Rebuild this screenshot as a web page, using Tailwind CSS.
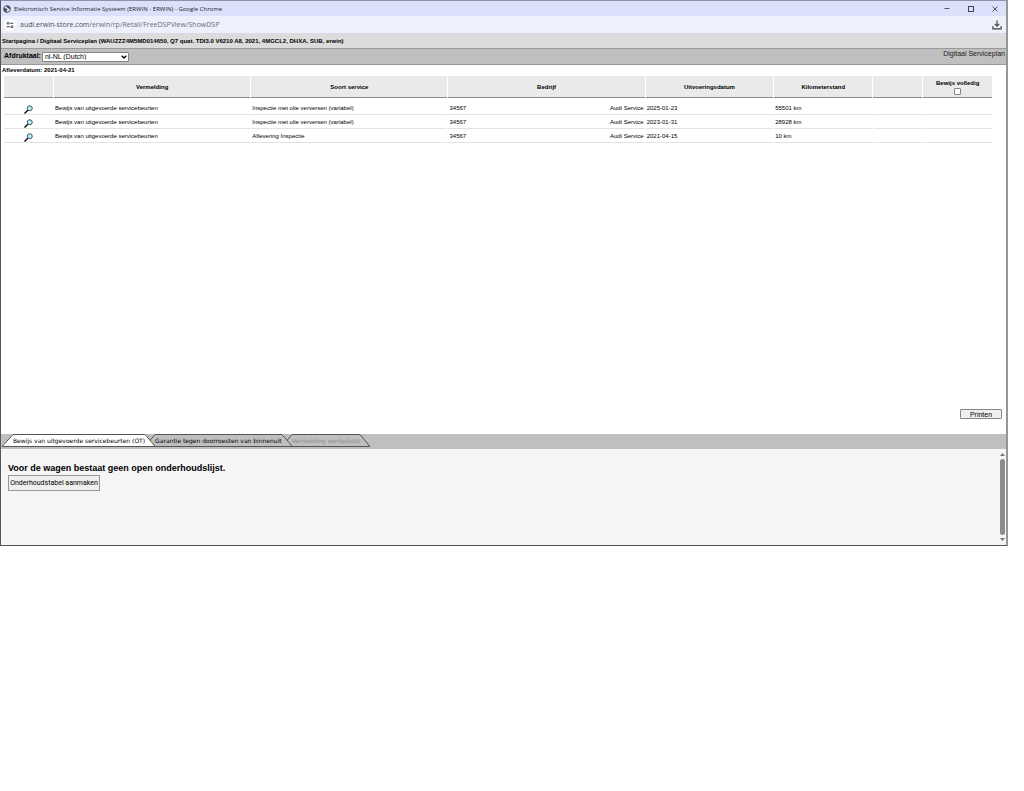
<!DOCTYPE html>
<html lang="nl">
<head>
  <meta charset="UTF-8" />
  <meta name="viewport" content="width=device-width, initial-scale=1.0"/>
  <title>Elektronisch Service Informatie Systeem (ERWIN - ERWIN)</title>
  <script src="https://cdn.jsdelivr.net/npm/@tailwindcss/browser@4"></script>
</head>
<body class="bg-white font-['Liberation_Sans',Arial,sans-serif] text-black">
  <div class="mr-4 border border-r-2 border-t-[#8f93a8] border-r-[#969696] border-b-[#555] border-l-[#555] bg-white">

    <!-- title bar -->
    <header class="flex h-[15px] items-center bg-[#dbe1fb] pr-2 pl-[2px] font-['Open_Sans','Noto_Sans',sans-serif] text-[6px] leading-none text-[#20222c]">
      <svg class="mr-[3px] size-2" viewBox="0 0 16 16" fill="none" stroke="#4a4d58" stroke-width="1.800">
        <circle cx="8" cy="8" r="6.800"/>
        <path fill="#4a4d58" stroke="none" d="M2 6l5 1 2 3-2 1v4l-4-2-2-4zM8 1l5 2 2 4-3 1-2-2-3-2z"/>
      </svg>
      <span>Elektronisch Service Informatie Systeem (ERWIN - ERWIN) - Google Chrome</span>
      <div class="ml-auto flex gap-[18px]">
        <button aria-label="Minimaliseren"><svg class="size-[6px]" viewBox="0 0 6 6" stroke="#555"><path d="M.5 2.500h5"/></svg></button>
        <button aria-label="Maximaliseren"><svg class="size-[6px]" viewBox="0 0 6 6" fill="none" stroke="#444"><rect x=".5" y=".5" width="5" height="5"/></svg></button>
        <button aria-label="Sluiten"><svg class="size-[6px]" viewBox="0 0 6 6" stroke="#333" stroke-width=".8"><path d="M.5.5l5 5M5.500.5l-5 5"/></svg></button>
      </div>
    </header>

    <!-- address bar -->
    <div class="flex h-[18px] items-center border-b border-[#d9dbe2] bg-[#eef1fb] pr-1 pl-[3px]">
      <span class="flex size-3 items-center justify-center rounded-full bg-white">
        <svg class="size-2" viewBox="0 0 16 16" fill="none" stroke="#44474e" stroke-width="2">
          <circle cx="4" cy="4.500" r="2"/><path d="M8 4.500h7M1 11.500h7"/><circle cx="12" cy="11.500" r="2"/>
        </svg>
      </span>
      <span class="ml-1 font-['Open_Sans','Noto_Sans',sans-serif] text-[7px] leading-none text-[#6a6d75]"><span class="text-[#4a4d55]">audi.erwin-store.com</span>/erwin/rp/Retail/FreeDSPView/ShowDSP</span>
      <button aria-label="Downloads" class="ml-auto">
        <svg class="size-[10px]" viewBox="0 0 18 18" fill="none" stroke="#3c3f46" stroke-width="2">
          <path d="M9 1v10M5 7l4 4 4-4M1.500 11v5h15v-5"/>
        </svg>
      </button>
    </div>

    <nav class="flex h-[14px] items-center bg-[#dcdcdc] pl-px text-[6px] font-bold">Startpagina / Digitaal Serviceplan (WAUZZZ4M5MD014650, Q7 quat. TDI3.0 V6210 A8, 2021, 4MGCL2, DHXA, SUB, erwin)</nav>

    <div class="flex h-[17px] items-center border-y border-[#999] bg-[#bfbfbf] pl-[3px] text-[7px]">
      <label for="taal" class="font-bold">Afdruktaal:</label>
      <div class="relative ml-px">
        <select id="taal" class="block h-[10px] w-[87px] appearance-none rounded-[1px] border border-[#858585] bg-white pl-[2px] text-[7px] leading-none">
          <option>nl-NL (Dutch)</option>
        </select>
        <svg class="pointer-events-none absolute top-[3px] right-[2px] h-1 w-[6px]" viewBox="0 0 6 4" fill="none" stroke="#000" stroke-width="1.300"><path d="M.7.7L3 3l2.300-2.300"/></svg>
      </div>
      <span class="mb-[5px] ml-auto pr-px text-[#222]">Digitaal Serviceplan</span>
    </div>

    <main class="flex min-h-[369px] flex-col">
      <p class="pl-px text-[6px] leading-[11px] font-bold">Afleverdatum: 2021-04-21</p>

      <div class="pr-[13px] pl-[2px]">
        <table class="w-full table-fixed border-separate border-spacing-x-px border-spacing-y-0 text-[6px] leading-[8px]">
          <colgroup>
            <col class="w-[5%]"><col class="w-[20%]"><col class="w-[20%]"><col class="w-[20%]"><col class="w-[13%]"><col class="w-[10%]"><col class="w-[5%]"><col class="w-[7%]">
          </colgroup>
          <thead>
            <tr class="h-[22px] *:border-b *:border-[#888] *:bg-[#eaeaea] *:p-0">
              <th></th>
              <th>Vermelding</th>
              <th>Soort service</th>
              <th>Bedrijf</th>
              <th>Uitvoeringsdatum</th>
              <th>Kilometerstand</th>
              <th></th>
              <th>
                <label for="volledig" class="block">Bewijs volledig</label>
                <input id="volledig" type="checkbox" class="mx-auto mt-px block size-[7px] appearance-none rounded-[1px] border border-[#858585] bg-white">
              </th>
            </tr>
          </thead>
          <tbody id="rows" class="before:block before:h-[3px]"></tbody>
        </table>
      </div>

      <button class="mt-auto mr-1 mb-[15px] h-[10px] w-[42px] self-end rounded-[1px] border border-[#858585] bg-[#efefef] text-[7px] leading-none">Printen</button>
    </main>

    <!-- tabs -->
    <div class="flex h-[15px] items-start bg-[#bfbfbf] pl-px font-['DejaVu_Sans',Verdana,sans-serif] text-[6px] leading-none">
      <svg class="h-[13px] w-[11px]" viewBox="0 0 11 13" fill="none" stroke="#555"><path fill="#fff" stroke="none" d="M0 13L11 0v13z"/><path d="M0 12.500L11 .5M0 12.500h11"/></svg>
      <button class="h-[13px] border-y border-[#555] bg-white whitespace-nowrap">Bewijs van uitgevoerde servicebeurten (OT)</button>
      <svg class="h-[13px] w-[10px]" viewBox="0 0 10 13" fill="none" stroke="#555"><path fill="#fff" stroke="none" d="M0 0l10 12H0z"/><path d="M0 .5L10 12M5 6.500l5-6M0 12.500h10"/></svg>
      <button class="h-[13px] border-y border-[#555] whitespace-nowrap">Garantie tegen doorroesten van binnenuit</button>
      <svg class="h-[13px] w-[10px]" viewBox="0 0 10 13" fill="none" stroke="#555"><path d="M0 .5L10 12M5 6.500l5-6M0 12.500h10"/></svg>
      <button disabled class="h-[13px] border-y border-[#555] whitespace-nowrap text-[#8c8c8c]">Vermelding werkplaats</button>
      <svg class="h-[13px] w-[10px]" viewBox="0 0 10 13" fill="none" stroke="#555"><path d="M0 .5l10 12H0"/></svg>
    </div>

    <section class="flex min-h-24 bg-[#f5f5f5]">
      <div class="flex-1 pt-[14px] pl-[7px]">
        <h2 class="text-[9px] leading-[10px] font-bold">Voor de wagen bestaat geen open onderhoudslijst.</h2>
        <button class="mt-[2px] block h-4 w-[92px] border border-[#999] bg-[#efefef] font-[Roboto,sans-serif] text-[7px] leading-none whitespace-nowrap">Onderhoudstabel aanmaken</button>
      </div>
      <!-- scrollbar -->
      <div class="mr-px flex w-[5px] flex-col items-center gap-[3px] py-1">
        <svg class="h-[3px] w-[5px]" viewBox="0 0 5 3" fill="#777"><path d="M0 3L2.500 0 5 3z"/></svg>
        <div class="w-[5px] flex-1 rounded-full bg-[#8b8b8b]"></div>
        <svg class="h-[3px] w-[5px]" viewBox="0 0 5 3" fill="#777"><path d="M0 0l2.500 3L5 0z"/></svg>
      </div>
    </section>
  </div>

  <script>
    const rows = [
      ['Inspectie met olie verversen (variabel)', '2025-01-23', '55501 km'],
      ['Inspectie met olie verversen (variabel)', '2023-01-31', '28928 km'],
      ['Aflevering Inspectie', '2021-04-15', '10 km'],
    ];
    document.getElementById('rows').innerHTML = rows.map(([soort, datum, stand]) => `
      <tr class="h-[14px] *:border-b *:border-[#e2e2e2] *:p-0 *:pl-px">
        <td>
          <button aria-label="Details" class="mx-auto block pr-[2px]">
            <svg class="mt-[3px] size-[9px]" viewBox="0 0 18 18" fill="none">
              <path stroke="#111" stroke-width="3" d="M1 17l7-7"/>
              <circle cx="11.500" cy="6.500" r="5" fill="#b5eeee" stroke="#345" stroke-width="1.800"/>
            </svg>
          </button>
        </td>
        <td>Bewijs van uitgevoerde servicebeurten</td>
        <td>${soort}</td>
        <td><div class="flex justify-between pr-px"><span>34567</span><span>Audi Service</span></div></td>
        <td>${datum}</td>
        <td>${stand}</td>
        <td></td>
        <td></td>
      </tr>`).join('');
  </script>
</body>
</html>
